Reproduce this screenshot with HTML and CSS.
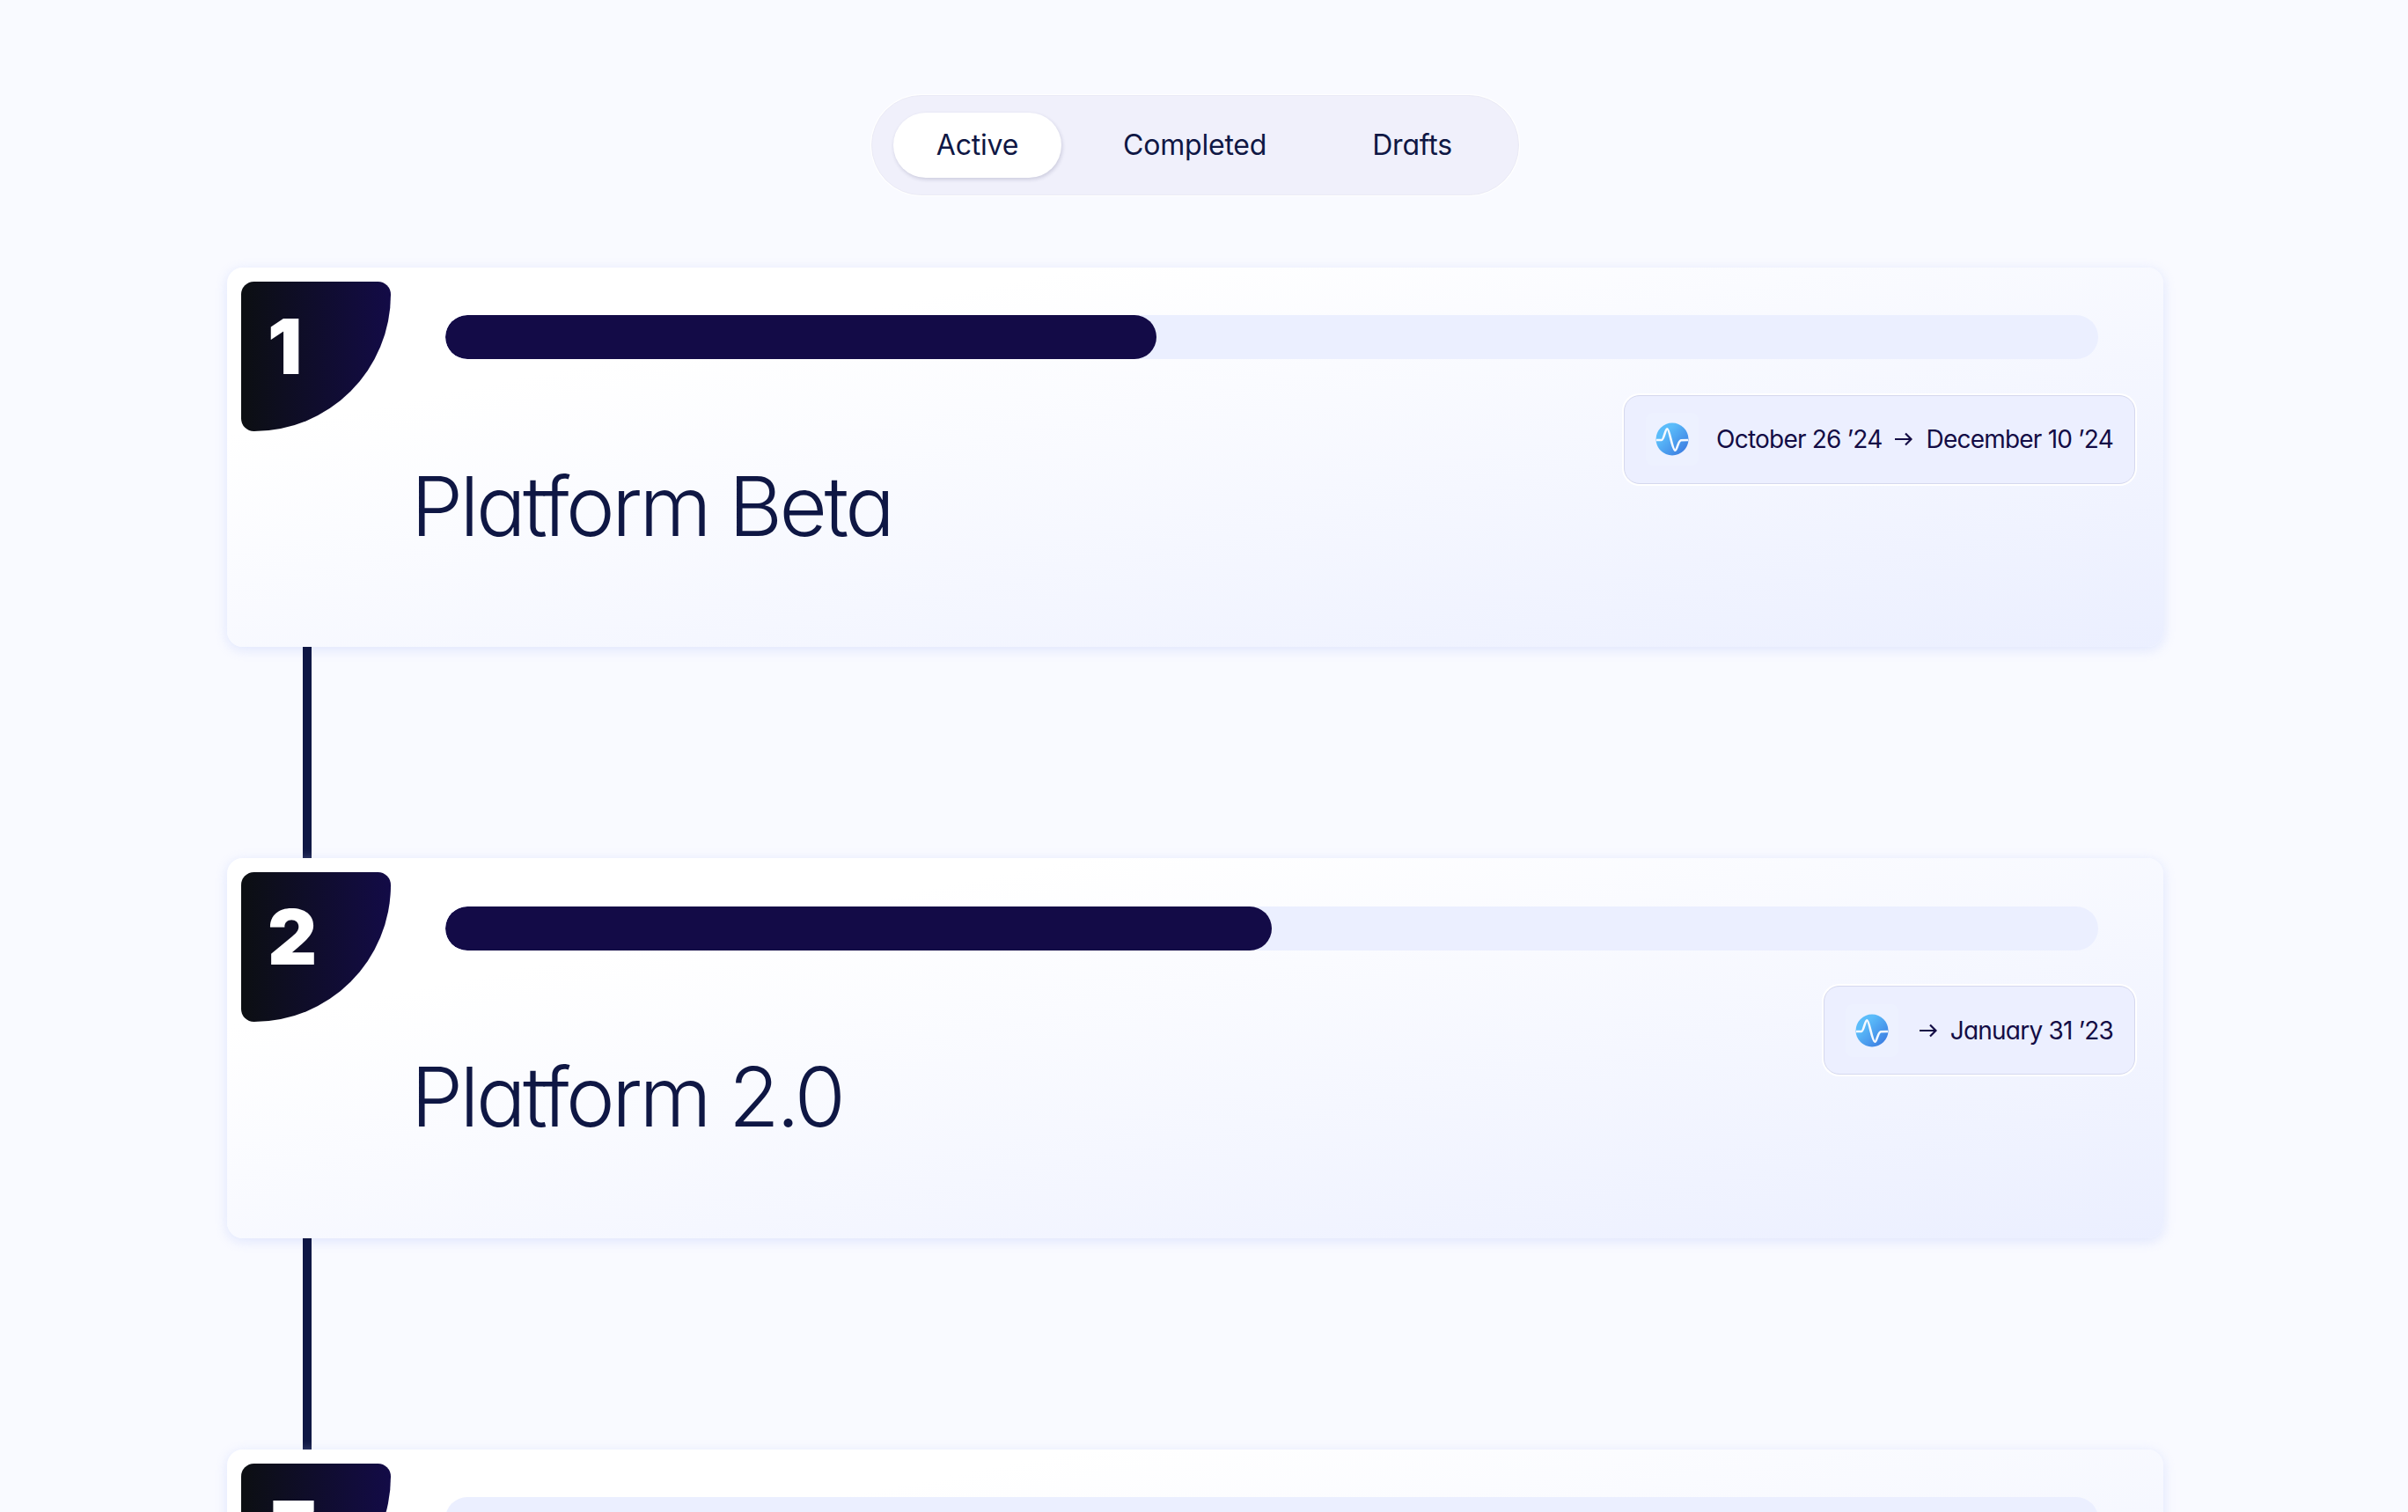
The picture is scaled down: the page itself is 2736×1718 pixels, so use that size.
FILE: index.html
```html
<!DOCTYPE html>
<html lang="en">
<head>
<meta charset="utf-8">
<title>Timeline</title>
<link rel="stylesheet" href="styles.css">
</head>
<body>
<main class="page">
  <nav class="tabs">
    <span class="tab tab-active">Active</span>
    <span class="tab">Completed</span>
    <span class="tab">Drafts</span>
  </nav>
  <section class="timeline">
    <article class="card">
      <div class="badge">1</div>
      <div class="card-body">
        <div class="track"><div class="fill" style="width:43%"></div></div>
        <div class="card-row">
          <h2 class="title">Platform Beta</h2>
          <div class="chip">
            <svg class="pulse" viewBox="0 0 60 60"><defs><linearGradient id="g1" x1="0" y1="0" x2="1" y2="1"><stop offset=".3" stop-color="#5bbcfa"/><stop offset="1" stop-color="#3672dd"/></linearGradient></defs><rect width="60" height="60" rx="8" fill="#edf1ff"/><circle cx="30" cy="30" r="18.5" fill="url(#g1)"/><path d="M12 31H18C20.500 31 22 18.500 24.300 18.300C27 18.300 30 42.500 33.300 42.700C35.500 42.700 36.500 32 40 31.300L48 31" fill="none" stroke="#f4f9ff" stroke-width="2.600"/></svg>
            <span class="date date-first">October 26 ’24</span>
            <svg class="arrow" viewBox="0 0 20 16"><path d="M0 8H18.500M12 1.500L18.500 8L12 14.500" fill="none" stroke="#130c45" stroke-width="2.200"/></svg>
            <span class="date">December 10 ’24</span>
          </div>
        </div>
      </div>
    </article>
    <div class="connector"></div>
    <article class="card">
      <div class="badge">2</div>
      <div class="card-body">
        <div class="track"><div class="fill" style="width:50%"></div></div>
        <div class="card-row">
          <h2 class="title">Platform 2.0</h2>
          <div class="chip">
            <svg class="pulse pulse-solo" viewBox="0 0 60 60"><defs><linearGradient id="g2" x1="0" y1="0" x2="1" y2="1"><stop offset=".3" stop-color="#5bbcfa"/><stop offset="1" stop-color="#3672dd"/></linearGradient></defs><rect width="60" height="60" rx="8" fill="#edf1ff"/><circle cx="30" cy="30" r="18.5" fill="url(#g2)"/><path d="M12 31H18C20.500 31 22 18.500 24.300 18.300C27 18.300 30 42.500 33.300 42.700C35.500 42.700 36.500 32 40 31.300L48 31" fill="none" stroke="#f4f9ff" stroke-width="2.600"/></svg>
            <svg class="arrow" viewBox="0 0 20 16"><path d="M0 8H18.500M12 1.500L18.500 8L12 14.500" fill="none" stroke="#130c45" stroke-width="2.200"/></svg>
            <span class="date">January 31 ’23</span>
          </div>
        </div>
      </div>
    </article>
    <div class="connector"></div>
    <article class="card">
      <div class="badge">3</div>
      <div class="card-body">
        <div class="track"></div>
      </div>
    </article>
  </section>
</main>
</body>
</html>
```
FILE: styles.css
```css
* { box-sizing: border-box; }
html, body { margin: 0; height: 1718px; overflow: hidden; background: #f9faff; }
body { font-family: Inter, "Noto Sans", sans-serif; font-feature-settings: "cv11" 1; color: #0f1744; }
.page { width: 2200px; margin-left: 258px; padding-top: 108px; display: flex; flex-direction: column; align-items: center; }
.tabs { display: flex; align-items: center; gap: 20px; width: 736px; height: 114px; padding: 0 24px; border-radius: 57px; background: #f0f0fb; border: 1px solid #ebebf6; box-shadow: 0 0 0 1px #fff; }
.tab { display: flex; align-items: center; justify-content: center; height: 74px; padding: 0 50px 1px; font-size: 32px; letter-spacing: -.2px; border-radius: 37px; white-space: nowrap; }
.tab-active { background: #fff; box-shadow: 1px 2px 4px rgba(40,40,90,.18); width: 191px; padding: 0 0 1px; }
.timeline { width: 100%; margin-top: 82px; display: flex; flex-direction: column; }
.card { display: flex; height: 431.4px; flex: none; padding: 16px 32px 0 16px; border-radius: 18px; background: linear-gradient(to bottom right, #fff 22%, #ebefff 100%); box-shadow: 0 3px 14px rgba(190,205,250,.45); }
.badge { flex: none; width: 170px; height: 170px; padding: 22px 0 0 30px; border-radius: 16px 16px 170px 16px; background: linear-gradient(90deg, #0c0f12, #130b47); color: #fff; font-size: 87px; font-weight: 900; line-height: 104px; letter-spacing: -2px; font-feature-settings: "cv09" 1; }
.card-body { flex: 1; padding: 38.4px 0 0 26px; min-width: 0; }
.track { height: 50px; margin: 0 42px 0 36px; border-radius: 25px; background: #ebefff; overflow: hidden; }
.fill { height: 100%; border-radius: 25px; background: #130b47; }
.card-row { display: flex; justify-content: space-between; align-items: flex-start; margin-top: 40.6px; }
.title { margin: 69px 0 0 -3px; font-size: 94px; font-weight: 350; line-height: 114px; letter-spacing: -3.5px; color: #0f1744; }
.chip { display: flex; align-items: center; height: 101px; padding: 0 24px; border-radius: 18px; background: #ecefff; border: 1px solid #d5d8ee; box-shadow: 0 0 0 2px #fff; color: #130c45; font-size: 28px; letter-spacing: -.78px; }
.pulse { flex: none; width: 60px; height: 60px; margin-right: 20px; }
.pulse-solo { margin-right: 24px; }
.arrow { flex: none; width: 20px; height: 16px; margin: 0 15px; }
.pulse-solo + .arrow { margin-left: 0; }
.date { white-space: nowrap; }
.connector { flex: none; width: 10px; height: 240px; margin-left: 86px; background: #0f1744; }
```
